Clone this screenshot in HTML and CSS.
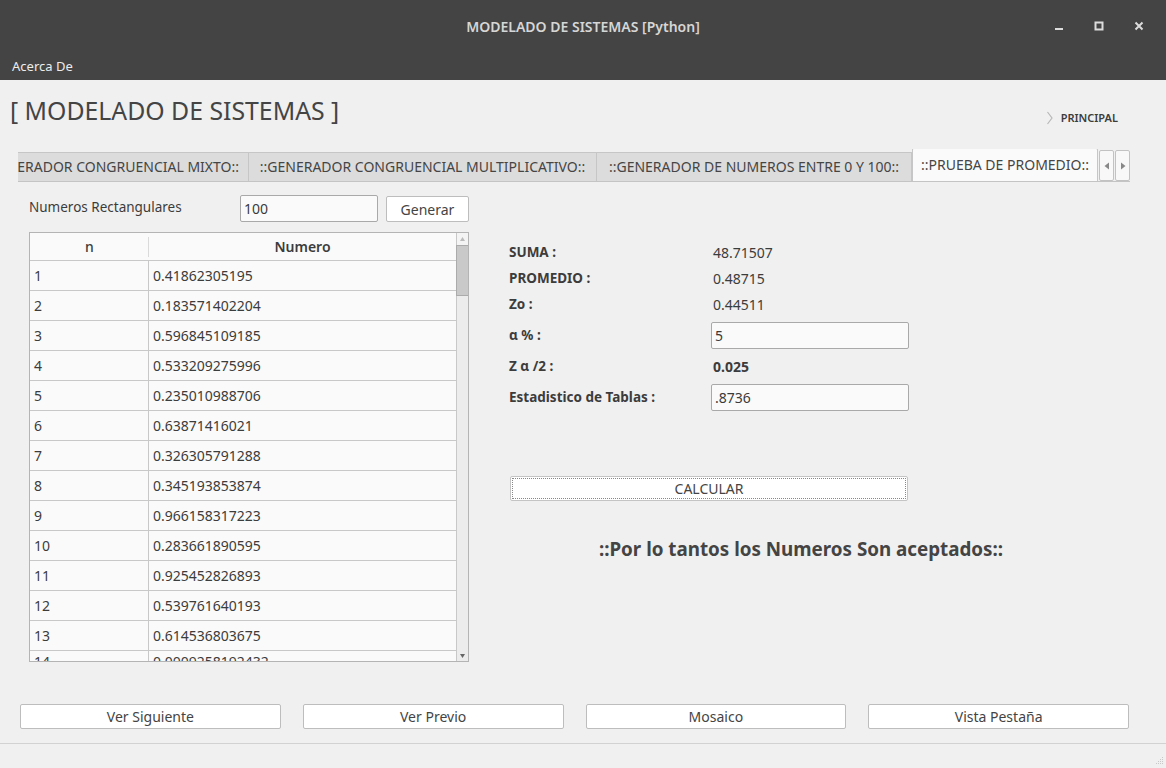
FILE: index.html
```html
<!DOCTYPE html>
<html lang="es">
<head>
<meta charset="utf-8">
<title>MODELADO DE SISTEMAS [Python]</title>
<link rel="stylesheet" href="styles.css">
</head>
<body>
<div class="window">
  <div class="titlebar">
    <div class="title">MODELADO DE SISTEMAS [Python]</div>
    <div class="wctrls">
      <svg class="wbtn" width="10" height="10" viewBox="0 0 10 10"><rect x="1" y="7" width="8" height="2" fill="#dcdcdc"/></svg>
      <svg class="wbtn" width="10" height="10" viewBox="0 0 10 10"><rect x="1.5" y="1.5" width="7" height="7" fill="none" stroke="#dcdcdc" stroke-width="2"/></svg>
      <svg class="wbtn" width="10" height="10" viewBox="0 0 10 10"><path d="M1.5 1.5 L8.5 8.5 M8.5 1.5 L1.5 8.5" stroke="#dcdcdc" stroke-width="2"/></svg>
    </div>
  </div>
  <div class="menubar"><span class="menuitem">Acerca De</span></div>

  <div class="main">
    <div class="header">
      <h1 class="apptitle">[ MODELADO DE SISTEMAS ]</h1>
      <div class="crumb">
        <svg width="8" height="14" viewBox="0 0 8 14"><path d="M1.5 1 L6 7 L1.5 13" fill="none" stroke="#b8b8b8" stroke-width="1.2"/></svg>
        <span>PRINCIPAL</span>
      </div>
    </div>

    <div class="tabs">
      <div class="tabclip">
        <div class="tab tab-first"><span>::GENERADOR CONGRUENCIAL MIXTO::</span></div>
        <div class="tab tab-second">::GENERADOR CONGRUENCIAL MULTIPLICATIVO::</div>
        <div class="tab tab-third">::GENERADOR DE NUMEROS ENTRE 0 Y 100::</div>
        <div class="tab tab-active">::PRUEBA DE PROMEDIO::</div>
        <div class="tabarrow"><svg width="6" height="8" viewBox="0 0 6 8"><path d="M5 0.5 L0.5 4 L5 7.5 Z" fill="#888"/></svg></div>
        <div class="tabarrow"><svg width="6" height="8" viewBox="0 0 6 8"><path d="M1 0.5 L5.5 4 L1 7.5 Z" fill="#888"/></svg></div>
      </div>
    </div>

    <div class="panel">
      <div class="left">
        <div class="genrow">
          <span class="genlabel">Numeros Rectangulares</span>
          <input class="field genfield" type="text" value="100">
          <button class="btn genbtn">Generar</button>
        </div>
        <div class="table">
          <div class="tbody">
            <div class="trow thead"><div class="cell c1">n</div><div class="cell c2">Numero</div></div>
            <div class="trow"><div class="cell c1">1</div><div class="cell c2">0.41862305195</div></div>
            <div class="trow"><div class="cell c1">2</div><div class="cell c2">0.183571402204</div></div>
            <div class="trow"><div class="cell c1">3</div><div class="cell c2">0.596845109185</div></div>
            <div class="trow"><div class="cell c1">4</div><div class="cell c2">0.533209275996</div></div>
            <div class="trow"><div class="cell c1">5</div><div class="cell c2">0.235010988706</div></div>
            <div class="trow"><div class="cell c1">6</div><div class="cell c2">0.63871416021</div></div>
            <div class="trow"><div class="cell c1">7</div><div class="cell c2">0.326305791288</div></div>
            <div class="trow"><div class="cell c1">8</div><div class="cell c2">0.345193853874</div></div>
            <div class="trow"><div class="cell c1">9</div><div class="cell c2">0.966158317223</div></div>
            <div class="trow"><div class="cell c1">10</div><div class="cell c2">0.283661890595</div></div>
            <div class="trow"><div class="cell c1">11</div><div class="cell c2">0.925452826893</div></div>
            <div class="trow"><div class="cell c1">12</div><div class="cell c2">0.539761640193</div></div>
            <div class="trow"><div class="cell c1">13</div><div class="cell c2">0.614536803675</div></div>
            <div class="trow last"><div class="cell c1">14</div><div class="cell c2">0.0009258192432</div></div>
          </div>
          <div class="vscroll">
            <div class="sarrow"><svg width="5" height="4" viewBox="0 0 5 4"><path d="M2.5 0 L5 4 L0 4 Z" fill="#bbb"/></svg></div>
            <div class="sthumb"></div>
            <div class="sspace"></div>
            <div class="sarrow down"><svg width="5" height="4" viewBox="0 0 5 4"><path d="M0 0 L5 0 L2.5 4 Z" fill="#666"/></svg></div>
          </div>
        </div>
      </div>

      <div class="right">
        <div class="frow"><span class="flabel">SUMA :</span><span class="fval">48.71507</span></div>
        <div class="frow"><span class="flabel">PROMEDIO :</span><span class="fval">0.48715</span></div>
        <div class="frow"><span class="flabel">Zo :</span><span class="fval">0.44511</span></div>
        <div class="frow tall"><span class="flabel">α % :</span><input class="field rfield" type="text" value="5"></div>
        <div class="frow"><span class="flabel">Z α /2 :</span><span class="fval strong">0.025</span></div>
        <div class="frow tall"><span class="flabel">Estadistico de Tablas :</span><input class="field rfield" type="text" value=".8736"></div>
        <button class="btn calc">CALCULAR</button>
        <div class="verdict">::Por lo tantos los Numeros Son aceptados::</div>
      </div>
    </div>

    <div class="actions">
      <button class="btn abtn">Ver Siguiente</button>
      <button class="btn abtn">Ver Previo</button>
      <button class="btn abtn">Mosaico</button>
      <button class="btn abtn">Vista Pestaña</button>
    </div>
  </div>

  <div class="statusbar">
    <svg class="grip" width="8" height="8" viewBox="0 0 8 8">
      <rect x="6" y="0" width="1" height="1" fill="#c8c8c8"/>
      <rect x="4" y="2" width="1" height="1" fill="#c8c8c8"/><rect x="6" y="2" width="1" height="1" fill="#c8c8c8"/>
      <rect x="2" y="4" width="1" height="1" fill="#c8c8c8"/><rect x="4" y="4" width="1" height="1" fill="#c8c8c8"/><rect x="6" y="4" width="1" height="1" fill="#c8c8c8"/>
      <rect x="0" y="6" width="1" height="1" fill="#c8c8c8"/><rect x="2" y="6" width="1" height="1" fill="#c8c8c8"/><rect x="4" y="6" width="1" height="1" fill="#c8c8c8"/><rect x="6" y="6" width="1" height="1" fill="#c8c8c8"/>
    </svg>
  </div>
</div>
</body>
</html>
```

FILE: styles.css
```css
* { box-sizing: border-box; }
html, body { margin: 0; padding: 0; }
body {
  width: 1166px;
  height: 768px;
  overflow: hidden;
  background: #f0f0f0;
  font-family: "Noto Sans", "DejaVu Sans", sans-serif;
  color: #444;
}
.window { width: 1166px; height: 768px; display: flex; flex-direction: column; }

.titlebar {
  height: 52px;
  background: #444444;
  display: flex;
  align-items: center;
  justify-content: center;
  position: relative;
}
.title { color: #d6d6d6; font-size: 14px; font-weight: 600; }
.wctrls {
  position: absolute;
  right: 22px;
  top: 21px;
  display: flex;
  gap: 30px;
}
.wbtn { display: block; }

.menubar {
  height: 28px;
  background: #444444;
  display: flex;
  align-items: center;
  padding-left: 12px;
}
.menuitem { color: #ececec; font-size: 13px; }

.main { height: 663px; display: flex; flex-direction: column; }

.header {
  height: 69px;
  display: flex;
  justify-content: space-between;
  align-items: flex-start;
  padding: 14px 48px 0 10px;
}
.apptitle {
  margin: 0;
  font-size: 24.8px;
  line-height: 32px;
  font-weight: 400;
  color: #444;
}
.crumb {
  display: flex;
  align-items: center;
  gap: 7px;
  margin-top: 16px;
  font-size: 11px;
  font-weight: 600;
  color: #3c3c3c;
}
.crumb svg { display: block; }

.tabs { height: 33px; padding-left: 18px; }
.tabclip {
  width: 1112px;
  height: 33px;
  overflow: hidden;
  display: flex;
  align-items: flex-end;
  border-bottom: 1px solid #c4c4c4;
}
.tab {
  flex: none;
  height: 29px;
  background: #dcdcdc;
  border: 1px solid #c6c6c6;
  border-bottom: none;
  border-left: none;
  font-size: 14px;
  line-height: 28px;
  color: #454545;
  text-align: center;
  white-space: nowrap;
  overflow: hidden;
}
.tab-first { width: 231px; }
.tab-first span { display: block; margin-left: -43px; width: 274px; text-align: right; padding-right: 10px; }
.tab-second { width: 348px; }
.tab-third { width: 315px; }
.tab-active {
  width: 186px;
  height: 34px;
  line-height: 32px;
  background: #fafafa;
  border: 1px solid #c6c6c6;
  border-bottom: none;
  border-radius: 2px 2px 0 0;
  margin-bottom: -1px;
}
.tabarrow {
  flex: none;
  width: 15px;
  height: 31px;
  margin-left: 1px;
  background: #f8f8f8;
  border: 1px solid #c2c2c2;
  border-radius: 2px;
  display: flex;
  align-items: center;
  justify-content: center;
}
.tabarrow svg { display: block; }

.panel { display: flex; padding-left: 29px; }
.left { width: 440px; }
.genrow {
  margin-top: 13px;
  height: 27px;
  display: flex;
  align-items: center;
}
.genlabel { width: 211px; font-size: 13.5px; color: #3c3c3c; margin-top: -4px; }
.field {
  font-family: "Noto Sans", "DejaVu Sans", sans-serif;
  font-size: 14px;
  color: #3a3a3a;
  background: #fafafa;
  border: 1px solid #a9a9a9;
  border-radius: 2px;
  height: 27px;
  padding: 0 3px;
  outline: none;
}
.genfield { width: 138px; }
.btn {
  font-family: "Noto Sans", "DejaVu Sans", sans-serif;
  font-size: 14px;
  color: #444;
  background: #ffffff;
  border: 1px solid #bdbdbd;
  border-radius: 2px;
  padding: 0;
}
.genbtn { width: 83px; height: 26px; margin-left: 8px; margin-top: 1px; }

.table {
  margin-top: 10px;
  width: 440px;
  height: 430px;
  border: 1px solid #b4b4b4;
  background: #fafafa;
  display: flex;
  overflow: hidden;
}
.tbody { width: 426px; overflow: hidden; }
.trow {
  height: 30px;
  display: flex;
  border-bottom: 1px solid #c8c8c8;
}
.cell {
  font-size: 14px;
  line-height: 29px;
  color: #3c3c3c;
  padding-left: 4px;
  white-space: nowrap;
}
.trow.last .cell { line-height: 22px; }
.c1 { width: 119px; border-right: 1px solid #c8c8c8; }
.c2 { flex: 1; }
.thead { height: 28px; }
.thead .cell {
  line-height: 27px;
  text-align: center;
  padding-left: 0;
  font-weight: 600;
  color: #3c3c3c;
}
.thead .c1 { border-right: none; position: relative; font-weight: 500; }
.thead .c1::after {
  content: "";
  position: absolute;
  right: 0;
  top: 4px;
  height: 20px;
  border-right: 1px solid #dadada;
}
.vscroll {
  width: 12px;
  border-left: 1px solid #c8c8c8;
  background: #ececec;
  display: flex;
  flex-direction: column;
}
.sarrow {
  height: 12px;
  display: flex;
  align-items: center;
  justify-content: center;
  background: #f4f4f4;
}
.sarrow.down { height: 10px; background: #ececec; }
.sthumb {
  height: 51px;
  background: #c9c9c9;
  border: 1px solid #ababab;
  margin: 0 -1px;
}
.sspace { flex: 1; }

.right { padding-left: 40px; padding-top: 57px; display: flex; flex-direction: column; }
.frow { height: 26px; display: flex; align-items: center; }
.frow.tall { height: 36px; }
.flabel { width: 202px; font-size: 13.5px; font-weight: 700; color: #3c3c3c; }
.fval { font-size: 14px; color: #3c3c3c; padding-left: 2px; }
.fval.strong { font-weight: 700; }
.rfield { width: 198px; font-size: 14px; }

.calc {
  margin-top: 61px;
  margin-left: 1px;
  width: 398px;
  height: 25px;
  font-size: 14px;
  outline: 1px dotted #888;
  outline-offset: -3px;
  border-color: #c4c4c4;
}
.verdict {
  margin-top: 33px;
  width: 584px;
  text-align: center;
  font-size: 18.8px;
  font-weight: 700;
  line-height: 30px;
  color: #444;
}

.actions {
  margin-top: auto;
  margin-bottom: 14px;
  padding: 0 37px 0 20px;
  display: grid;
  grid-template-columns: repeat(4, 1fr);
  gap: 22px;
}
.abtn { height: 25px; font-size: 14px; }

.statusbar {
  flex: 1;
  border-top: 1px solid #d2d2d2;
  position: relative;
}
.grip { position: absolute; right: 2px; bottom: 3px; }
```
